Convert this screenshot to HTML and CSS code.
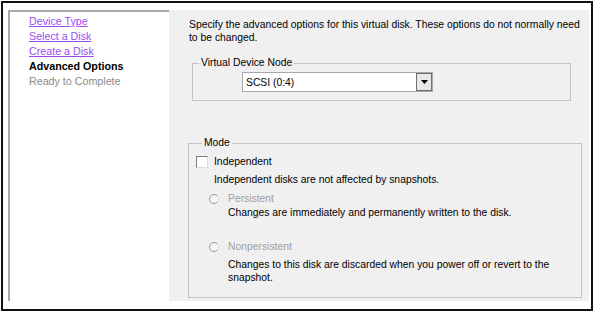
FILE: index.html
```html
<!DOCTYPE html>
<html lang="en">
<head>
  <meta charset="UTF-8" />
  <title>New Virtual Disk - Advanced Options</title>
  <link rel="stylesheet" href="styles.css">
</head>
<body>
  <div class="frame">
    <div class="wizard">
      <ul class="steps">
        <li><a href="#">Device Type</a></li>
        <li><a href="#">Select a Disk</a></li>
        <li><a href="#">Create a Disk</a></li>
        <li class="current">Advanced Options</li>
        <li class="pending">Ready to Complete</li>
      </ul>

      <div class="page">
        <p class="intro">Specify the advanced options for this virtual disk. These options do not normally need to be changed.</p>

        <fieldset class="group node">
          <legend>Virtual Device Node</legend>
          <div class="combo">
            <span class="combo-value">SCSI (0:4)</span>
            <span class="combo-btn">
              <svg width="7" height="4" viewBox="0 0 7 4"><path d="M0 0h7L3.5 4z" fill="#000"/></svg>
            </span>
          </div>
        </fieldset>

        <fieldset class="group mode">
          <legend>Mode</legend>
          <label class="check"><span class="checkbox"></span>Independent</label>
          <p class="hint">Independent disks are not affected by snapshots.</p>

          <div class="radio">
            <svg width="10" height="10" viewBox="0 0 10 10">
              <circle cx="5" cy="5" r="4.5" fill="#f6f6f6" stroke="#e2e2e2"/>
              <path d="M8.2 1.8A4.5 4.5 0 1 0 8.2 8.2" fill="none" stroke="#9a9a9a"/>
            </svg>
            <span>Persistent</span>
          </div>
          <p class="radio-hint">Changes are immediately and permanently written to the disk.</p>

          <div class="radio second">
            <svg width="10" height="10" viewBox="0 0 10 10">
              <circle cx="5" cy="5" r="4.5" fill="#f6f6f6" stroke="#e2e2e2"/>
              <path d="M8.2 1.8A4.5 4.5 0 1 0 8.2 8.2" fill="none" stroke="#9a9a9a"/>
            </svg>
            <span>Nonpersistent</span>
          </div>
          <p class="radio-hint">Changes to this disk are discarded when you power off or revert to the snapshot.</p>
        </fieldset>
      </div>
    </div>
  </div>
</body>
</html>
```

FILE: styles.css
```css
* {
  box-sizing: border-box;
  margin: 0;
  padding: 0;
}

body {
  font-family: "Liberation Sans", Arial, sans-serif;
  font-size: 10.35px;
  line-height: 13px;
  color: #000;
  background: #fff;
}

/* Outer frame */
.frame {
  margin: 1px;
  width: 592px;
  height: 310px;
  border: 2px solid #111;
  padding: 7px 2px 8px 5px;
}

.wizard {
  display: flex;
  height: 100%;
}

/* Step list */
.steps {
  list-style: none;
  width: 161px;
  background: #fff;
  border-left: 2px solid #a8a8a8;
  border-top: 2px solid #a8a8a8;
  padding: 2px 0 0 19px;
  font-size: 10.7px;
  line-height: 15px;
}

.steps a {
  color: #9a4cf0;
  text-decoration: underline;
}

.steps .current {
  font-weight: bold;
}

.steps .pending {
  color: #8a8a8a;
}

/* Page */
.page {
  flex: 1;
  background: #f0f0f0;
  display: flex;
  flex-direction: column;
}

.intro {
  padding: 8px 0 0 20px;
}

.group {
  border: 1px solid #c4c4c4;
  padding: 0;
}

.group legend {
  margin-left: 6px;
  padding: 0 2px;
  line-height: 12px;
}

.node {
  margin: 13px 18px 0 23px;
  padding: 3px 0 8px 0;
}

.combo {
  display: flex;
  width: 191px;
  height: 20px;
  margin-left: 49px;
  background: #fff;
  border: 1px solid #a9a9a9;
  align-items: center;
}

.combo-value {
  flex: 1;
  padding-left: 3px;
}

.combo-btn {
  display: flex;
  align-items: center;
  justify-content: center;
  width: 16px;
  height: 18px;
  border: 1px solid #707070;
  background: #e8e8e8;
}

.mode {
  margin: 36px 7px 3px 19px;
  padding: 6px 0 0 7px;
  flex: 1;
}

.check {
  display: flex;
  align-items: center;
}

.checkbox {
  width: 12px;
  height: 12px;
  margin-right: 6px;
  background: #fff;
  border: 1px solid;
  border-color: #7a7a7a #dcdcdc #dcdcdc #7a7a7a;
}

.hint {
  margin-top: 5px;
  padding-left: 18px;
}

.radio {
  display: flex;
  align-items: center;
  margin-top: 6px;
  padding-left: 13px;
  color: #a0a0a0;
}

.radio svg {
  margin-right: 9px;
}

.radio.second {
  margin-top: 21px;
}

.radio-hint {
  margin-top: 1px;
  padding: 0 10px 0 32px;
}

.radio.second + .radio-hint {
  margin-top: 5px;
}
```
